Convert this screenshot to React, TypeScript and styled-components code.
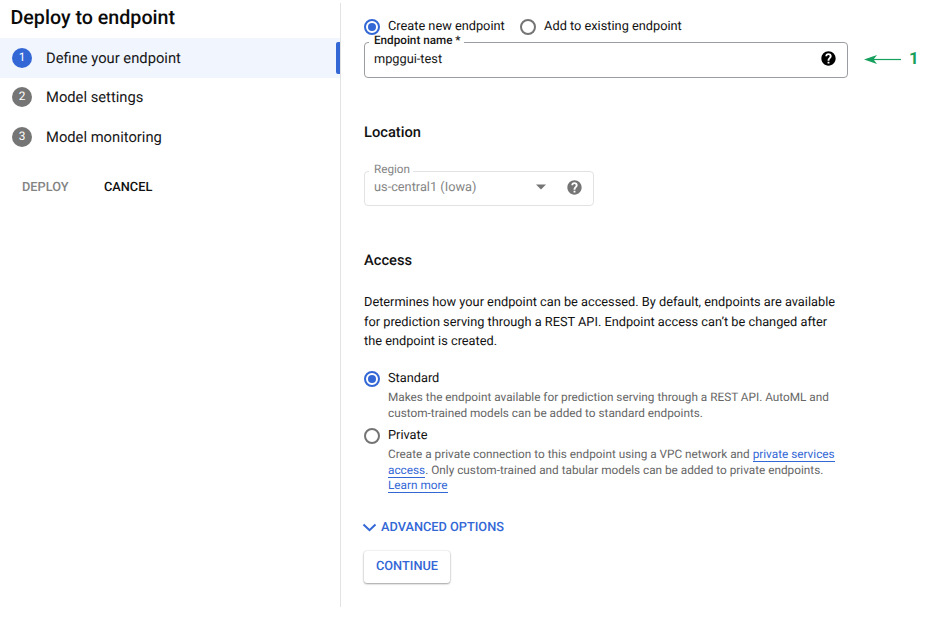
import React from "react";
import styled, { createGlobalStyle } from "styled-components";

const BLUE = "#3367d6";

const GlobalStyle = createGlobalStyle`
  *, *::before, *::after { box-sizing: border-box; }
  body {
    margin: 0;
    background: #fff;
    color: #111;
    font-family: Roboto, "Liberation Sans", sans-serif;
    font-size: 12.78px;
    text-rendering: geometricPrecision;
  }
  button { text-rendering: inherit; }
`;

const Page = styled.div`
  display: flex;
  width: 949px;
  height: 623px;
  overflow: hidden;
  background: #fff;
`;

const Sidebar = styled.aside`
  width: 340px;
  flex: none;
`;

const Title = styled.h1`
  margin: 0;
  padding: 5px 0 0 10.5px;
  height: 38.4px;
  font-size: 19.66px;
  line-height: 25px;
  font-weight: 500;
  color: #0b0b0b;
`;

const Step = styled.div<{ $active?: boolean }>`
  display: flex;
  align-items: center;
  height: 39.3px;
  padding-left: 12px;
  gap: 14px;
  font-size: 14.75px;
  color: #161616;
  background: ${(p) => (p.$active ? "#f0f5fe" : "transparent")};
`;

const StepNumber = styled.span<{ $active?: boolean }>`
  display: flex;
  justify-content: center;
  width: 20px;
  height: 20px;
  border-radius: 50%;
  background: ${(p) => (p.$active ? BLUE : "#757575")};
  color: #fff;
  font-size: 11.8px;
  line-height: 19px;
`;

const ActiveBar = styled.span`
  width: 4px;
  height: 32px;
  margin-left: auto;
  border-radius: 2px 0 0 2px;
  background: ${BLUE};
`;

const Actions = styled.div`
  display: flex;
  gap: 35.5px;
  padding: 22px 0 0 22px;
`;

const TextButton = styled.button<{ $muted?: boolean }>`
  padding: 0;
  border: 0;
  background: none;
  font: 500 12.78px/20px Roboto, sans-serif;
  color: ${(p) => (p.$muted ? "#848484" : "#111")};
`;

const Divider = styled.div`
  width: 1px;
  height: 604px;
  margin-top: 3px;
  background: #e2e2e2;
`;

const Main = styled.main`
  width: 484px;
  margin-left: 23px;
  padding-top: 16px;
  flex: none;
`;

const RadioRow = styled.div`
  position: relative;
  z-index: 1;
  display: flex;
  gap: 15.4px;
`;

const Radio = styled.label`
  display: flex;
  align-items: flex-start;
  gap: 8px;
  height: 20px;
`;

const RadioDot = styled.span<{ $checked?: boolean }>`
  display: flex;
  flex: none;
  width: 16px;
  height: 16px;
  margin-top: 3px;
  border: 2px solid ${(p) => (p.$checked ? BLUE : "#747474")};
  border-radius: 50%;
  &::after {
    content: "";
    width: 8px;
    height: 8px;
    margin: auto;
    border-radius: 50%;
    background: ${(p) => (p.$checked ? BLUE : "transparent")};
  }
`;

const RadioLabel = styled.span`
  padding-top: 1px;
  font-size: 12.78px;
  line-height: 20px;
`;

const Field = styled.div<{ $disabled?: boolean }>`
  position: relative;
  display: flex;
  align-items: center;
  width: ${(p) => (p.$disabled ? "230px" : "484px")};
  height: ${(p) => (p.$disabled ? "35px" : "36px")};
  margin-top: ${(p) => (p.$disabled ? "29px" : "6px")};
  padding: 0 11px 3px 9px;
  border: 1px solid ${(p) => (p.$disabled ? "#e2e2e2" : "#9a9da1")};
  border-radius: 4px;
  color: ${(p) => (p.$disabled ? "#848484" : "#161616")};
`;

const FieldLabel = styled.span<{ $strong?: boolean }>`
  position: absolute;
  top: -11px;
  left: 4px;
  padding: 0 3px 0 5px;
  background: #fff;
  font-size: 11.7px;
  line-height: 16px;
  font-weight: ${(p) => (p.$strong ? 500 : 400)};
`;

const FieldValue = styled.span`
  flex: 1;
  padding-top: 2px;
  font-size: 12.78px;
  line-height: 18px;
`;

const Heading = styled.h2`
  margin: 44px 0 0;
  font-size: 14.7px;
  line-height: 20px;
  font-weight: 500;
`;

const Intro = styled.p`
  margin: 23px 0 0;
  font-size: 12.78px;
  line-height: 19.7px;
  white-space: nowrap;
`;

const Options = styled.div`
  margin-top: 16px;
`;

const Option = styled.div`
  height: 57px;
`;

const OptionText = styled.p`
  margin: 1.6px 0 0 24px;
  font-size: 11.79px;
  line-height: 15.8px;
  color: #666;
  white-space: nowrap;
`;

const Link = styled.a`
  color: ${BLUE};
  border-bottom: 1px solid ${BLUE};
`;

const Advanced = styled.button`
  display: flex;
  align-items: center;
  gap: 4px;
  margin: 36px 0 0 -2px;
  padding: 0;
  border: 0;
  background: none;
  color: ${BLUE};
  font: 500 12.78px/20px Roboto, sans-serif;

  svg {
    margin-bottom: 1px;
  }
`;

const Continue = styled.button`
  width: 86px;
  height: 32px;
  margin-top: 13px;
  padding: 0;
  border: 0;
  border-radius: 3px;
  background: #fff;
  color: ${BLUE};
  font: 500 12.78px/20px Roboto, sans-serif;
  box-shadow: 0 1px 2px rgba(0, 0, 0, 0.34), 0 0 2px rgba(0, 0, 0, 0.16);
`;

const Callout = styled.div`
  display: flex;
  align-items: center;
  gap: 7px;
  height: 20px;
  margin: 49px 0 0 16px;
  color: #16a05d;
  font: bold 17px/20px Roboto, sans-serif;
`;

const CaretIcon = styled.svg`
  margin-right: 21px;
`;

function HelpIcon({ color }: { color: string }) {
  return (
    <svg width="15" height="15" viewBox="1.5 1.5 21 21" fill={color}>
      <path d="M12 2C6.48 2 2 6.48 2 12s4.48 10 10 10 10-4.48 10-10S17.52 2 12 2zm1.3 17h-2.6v-2.6h2.6V19zm2.1-7.6-.95.97C13.7 13.1 13.3 13.7 13.3 15h-2.6v-.6c0-1.1.45-2.1 1.17-2.83l1.24-1.26c.37-.36.59-.86.59-1.41a1.8 1.8 0 0 0-3.6 0H7.6a4.4 4.4 0 0 1 8.8 0c0 .98-.4 1.87-1 2.5z" />
    </svg>
  );
}

const steps = ["Define your endpoint", "Model settings", "Model monitoring"];

export default function App() {
  return (
    <Page>
      <GlobalStyle />
      <Sidebar>
        <Title>Deploy to endpoint</Title>
        {steps.map((label, i) => (
          <Step key={label} $active={i === 0}>
            <StepNumber $active={i === 0}>{i + 1}</StepNumber>
            <span>{label}</span>
            {i === 0 && <ActiveBar />}
          </Step>
        ))}
        <Actions>
          <TextButton $muted>DEPLOY</TextButton>
          <TextButton>CANCEL</TextButton>
        </Actions>
      </Sidebar>
      <Divider />
      <Main>
        <RadioRow>
          <Radio>
            <RadioDot $checked />
            <RadioLabel>Create new endpoint</RadioLabel>
          </Radio>
          <Radio>
            <RadioDot />
            <RadioLabel>Add to existing endpoint</RadioLabel>
          </Radio>
        </RadioRow>
        <Field>
          <FieldLabel $strong>Endpoint name *</FieldLabel>
          <FieldValue>mpggui-test</FieldValue>
          <HelpIcon color="#000" />
        </Field>
        <Heading>Location</Heading>
        <Field $disabled>
          <FieldLabel>Region</FieldLabel>
          <FieldValue>us-central1 (Iowa)</FieldValue>
          <CaretIcon width="10" height="6" viewBox="0 0 10 6" fill="#757575">
            <path d="M0 .5h10L5 5.5z" />
          </CaretIcon>
          <HelpIcon color="#757575" />
        </Field>
        <Heading>Access</Heading>
        <Intro>
          Determines how your endpoint can be accessed. By default, endpoints are available
          <br />
          for prediction serving through a REST API. Endpoint access can’t be changed after
          <br />
          the endpoint is created.
        </Intro>
        <Options>
          <Option>
            <Radio>
              <RadioDot $checked />
              <RadioLabel>Standard</RadioLabel>
            </Radio>
            <OptionText>
              Makes the endpoint available for prediction serving through a REST API. AutoML and
              <br />
              custom-trained models can be added to standard endpoints.
            </OptionText>
          </Option>
          <Option>
            <Radio>
              <RadioDot />
              <RadioLabel>Private</RadioLabel>
            </Radio>
            <OptionText>
              Create a private connection to this endpoint using a VPC network and{" "}
              <Link>private services</Link>
              <br />
              <Link>access</Link>. Only custom-trained and tabular models can be added to private
              endpoints.
              <br />
              <Link>Learn more</Link>
            </OptionText>
          </Option>
        </Options>
        <Advanced>
          <svg width="15" height="9" viewBox="0 0 15 9" fill="none" stroke={BLUE} strokeWidth="2">
            <path d="M1.5 1.5l6 5.7 6-5.7" />
          </svg>
          ADVANCED OPTIONS
        </Advanced>
        <Continue>CONTINUE</Continue>
      </Main>
      <Callout>
        <svg width="38" height="10" viewBox="0 0 38 10">
          <path d="M8 5.5H37" stroke="#16a05d" strokeWidth="1.2" />
          <path d="M0 5.5L13 1 9.5 5.5 13 10z" fill="#16a05d" />
        </svg>
        1
      </Callout>
    </Page>
  );
}
